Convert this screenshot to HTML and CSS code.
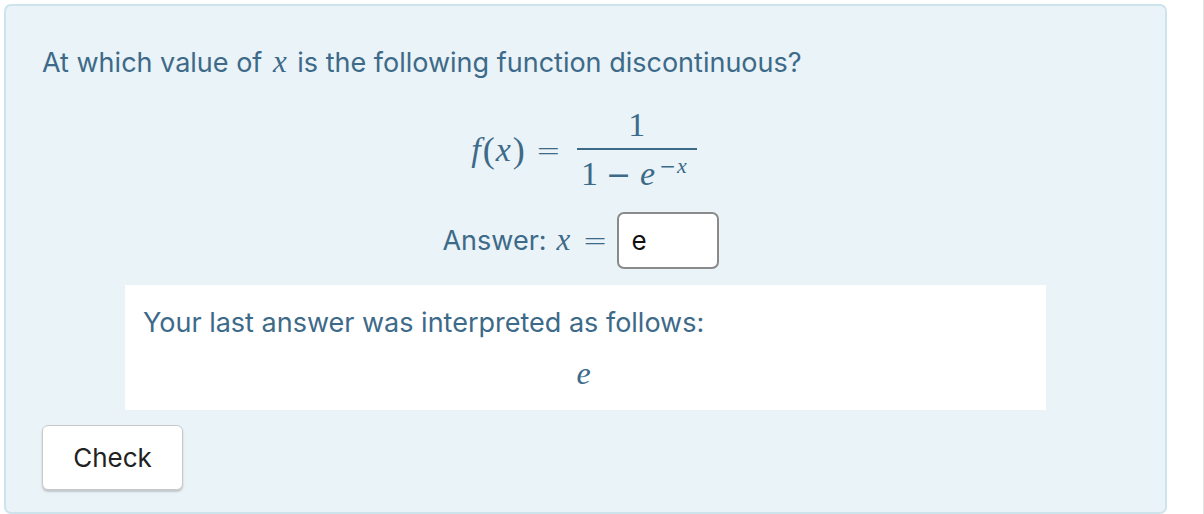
FILE: index.html
```html
<!DOCTYPE html>
<html>
<head>
<meta charset="utf-8">
<link rel="stylesheet" href="styles.css">
</head>
<body>
<div class="panel">
  <p class="question">At which value of <span class="mi">x</span> is the following function discontinuous?</p>
  <div class="display">
    <span class="mi fi">f</span><span class="mo">(</span><span class="mi">x</span><span class="mo">)</span>
    <span class="rel">=</span>
    <span class="frac">
      <span class="num">1</span>
      <span class="den">1<span class="minus">−</span><span class="mi">e</span><sup class="sup"><span class="sminus">−</span><span class="mi">x</span></sup></span>
    </span>
  </div>
  <div class="answer">
    <span class="label">Answer:</span>
    <span class="mi ax">x</span>
    <span class="rel">=</span>
    <span class="input">e</span>
  </div>
  <div class="feedback">
    <p class="fb-text">Your last answer was interpreted as follows:</p>
    <div class="fb-math"><span class="mi">e</span></div>
  </div>
  <div class="actions">
    <button class="check">Check</button>
  </div>
</div>
</body>
</html>
```

FILE: styles.css
```css
html, body {
  margin: 0;
  padding: 0;
  background: #ffffff;
}
body {
  font-family: "Inter", "Liberation Sans", Arial, sans-serif;
  color: #3d6a89;
  border-right: 1px solid #e4e4e4;
  width: 1203px;
  height: 514px;
  overflow: hidden;
}
.panel {
  margin: 4px 0 0 4px;
  width: 1163px;
  height: 510px;
  box-sizing: border-box;
  background: #eaf3f7;
  border: 2px solid #cde4ed;
  border-radius: 7px;
  padding: 0 36px;
  display: flex;
  flex-direction: column;
}
.question {
  margin: 38px 0 0 0;
  font-size: 27px;
  line-height: 36px;
}
.mi {
  font-family: "Liberation Serif", "Times New Roman", serif;
  font-style: italic;
}
.question .mi {
  font-size: 31px;
  margin: 0 3px;
}
.display {
  display: flex;
  align-items: center;
  justify-content: center;
  margin-top: 24px;
  height: 90px;
  font-family: "Liberation Serif", serif;
  font-size: 34px;
  padding-right: 4px;
}
.display .mo {
  font-size: 36px;
}
.fi {
  margin-right: 6px;
}
.display .mi {
  margin-left: 1px;
  margin-right: 2px;
}
.rel {
  font-family: "DejaVu Sans", sans-serif;
  font-size: 30px;
  font-weight: 300;
  margin: 0 16px 0 11px;
}
.frac {
  display: inline-flex;
  flex-direction: column;
  align-items: center;
}
.num {
  line-height: 36px;
  padding: 0 0 5px;
}
.den {
  border-top: 2px solid #3d6a89;
  line-height: 36px;
  padding: 6px 8px 0 4px;
  white-space: nowrap;
}
.minus {
  font-family: "DejaVu Sans", sans-serif;
  font-size: 30px;
  margin: 0 8px;
}
.sup {
  font-size: 22px;
  vertical-align: 12px;
  line-height: 0;
  margin-left: 2px;
}
.sminus {
  font-family: "DejaVu Sans", sans-serif;
  font-size: 20px;
}
.answer {
  display: flex;
  align-items: center;
  justify-content: center;
  margin-top: 16px;
  height: 58px;
  padding-right: 10px;
}
.label {
  font-size: 27px;
}
.ax {
  font-size: 31px;
  margin-left: 10px;
}
.answer .rel {
  margin: 0 9px 0 12px;
}
.input {
  box-sizing: border-box;
  width: 102px;
  height: 57px;
  background: #ffffff;
  border: 2px solid #8a8a8a;
  border-radius: 7px;
  color: #111111;
  font-size: 26px;
  line-height: 53px;
  padding-left: 13px;
}
.feedback {
  margin: 16px 83px 0 83px;
  background: #ffffff;
  height: 125px;
  box-sizing: border-box;
  padding: 20px 18px 0 18px;
}
.fb-text {
  margin: 0;
  font-size: 27px;
  line-height: 36px;
}
.fb-math {
  text-align: center;
  font-size: 32px;
  margin-top: 12px;
  padding-right: 4px;
}
.actions {
  margin-top: 15px;
}
.check {
  box-sizing: border-box;
  width: 141px;
  height: 65px;
  background: #ffffff;
  border: 1px solid #c8c8c8;
  border-radius: 6px;
  box-shadow: 0 2px 2px rgba(0, 0, 0, 0.18);
  font-family: "Inter", "Liberation Sans", Arial, sans-serif;
  font-size: 26px;
  color: #222222;
  padding: 0;
}
```
